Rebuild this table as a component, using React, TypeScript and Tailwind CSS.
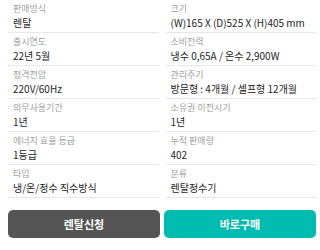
import React from "react";

const rows: [string, string, string, string][] = [
  ["판매방식", "렌탈", "크기", "(W)165 X (D)525 X (H)405 mm"],
  ["출시연도", "22년 5월", "소비전력", "냉수 0,65A / 온수 2,900W"],
  ["정격전압", "220V/60Hz", "관리주기", "방문형 : 4개월 / 셀프형 12개월"],
  ["의무사용기간", "1년", "소유권 이전시기", "1년"],
  ["에너지 효율 등급", "1등급", "누적 판매량", "402"],
  ["타입", "냉/온/정수 직수방식", "분류", "렌탈정수기"],
];

function Cell({ label, value }: { label: string; value: string }) {
  return (
    <div className="flex flex-col h-[33px] border-b border-[#e8e8e8] px-[5px] pt-[3px]">
      <div className="text-[9px] leading-[12px] text-[#a0a0a0]">{label}</div>
      <div className="text-[10px] leading-[14px] text-[#262626] mt-[1px] whitespace-nowrap">{value}</div>
    </div>
  );
}

export default function App() {
  return (
    <div
      className="w-[320px] h-[250px] bg-white"
      style={{ fontFamily: '"Noto Sans CJK KR", "Noto Sans", sans-serif' }}
    >
      <div className="grid grid-cols-2 gap-x-[7px] pl-[8px] pr-[4px]">
        {rows.map((r, i) => (
          <React.Fragment key={i}>
            <Cell label={r[0]} value={r[1]} />
            <Cell label={r[2]} value={r[3]} />
          </React.Fragment>
        ))}
      </div>
      <div className="flex gap-[4px] pl-[8px] pr-[4px] mt-[12px]">
        <button className="flex-1 h-[28px] rounded-[5px] bg-[#555555] text-white text-[11px] font-bold">
          렌탈신청
        </button>
        <button className="flex-1 h-[28px] rounded-[5px] bg-[#00bcb0] text-white text-[11px] font-bold">
          바로구매
        </button>
      </div>
    </div>
  );
}
